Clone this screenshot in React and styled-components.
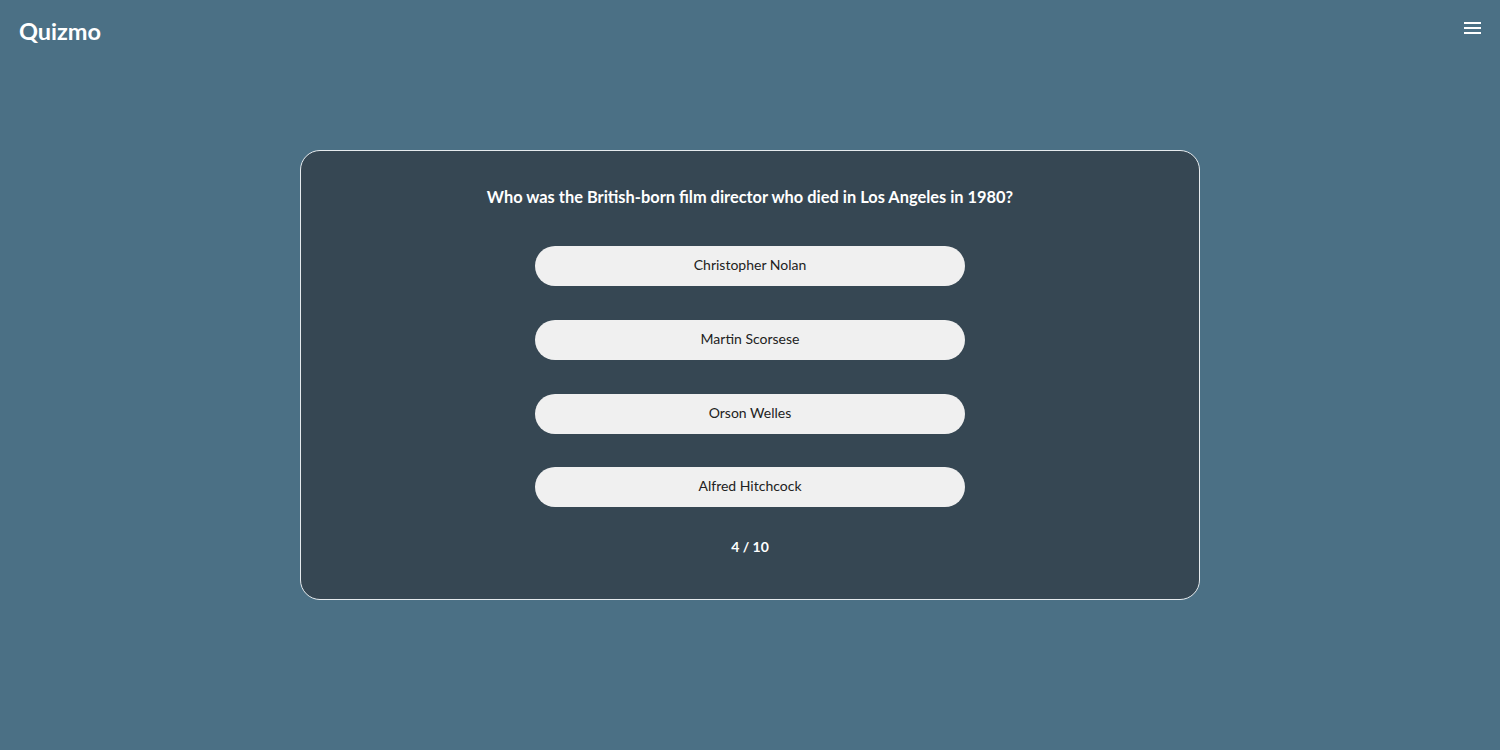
import styled, { createGlobalStyle } from "styled-components";

const GlobalStyle = createGlobalStyle`
  html, body {
    margin: 0;
    padding: 0;
    background: #4b7085;
    font-family: "Lato", "Noto Sans", sans-serif;
  }
`;

const answers = [
  "Christopher Nolan",
  "Martin Scorsese",
  "Orson Welles",
  "Alfred Hitchcock",
];

export default function App() {
  return (
    <>
      <GlobalStyle />
      <Page>
        <Header>
          <Logo>Quizmo</Logo>
          <MenuButton aria-label="menu">
            <span />
            <span />
            <span />
          </MenuButton>
        </Header>
        <Main>
          <Card>
            <Question>
              Who was the British-born film director who died in Los Angeles in 1980?
            </Question>
            <Answers>
              {answers.map((a) => (
                <Answer key={a}>{a}</Answer>
              ))}
            </Answers>
            <Counter>4 / 10</Counter>
          </Card>
        </Main>
      </Page>
    </>
  );
}

const Page = styled.div`
  width: 100%;
  min-height: 750px;
  background: #4b7085;
  display: flex;
  flex-direction: column;
`;

const Header = styled.header`
  height: 62px;
  box-sizing: border-box;
  padding: 0 19px;
  display: flex;
  align-items: center;
  justify-content: space-between;
`;

const Logo = styled.div`
  color: #fff;
  font-size: 23.5px;
  font-weight: 700;
  margin-top: -1px;
`;

const MenuButton = styled.button`
  background: none;
  border: none;
  padding: 0;
  width: 17px;
  display: flex;
  flex-direction: column;
  gap: 3px;
  margin-top: -6px;
  cursor: pointer;

  span {
    display: block;
    height: 2px;
    width: 17px;
    background: #fff;
  }
`;

const Main = styled.main`
  display: flex;
  justify-content: center;
  padding-top: 88px;
`;

const Card = styled.section`
  width: 900px;
  box-sizing: border-box;
  background: #364753;
  border: 1px solid #e6ebee;
  border-radius: 20px;
  padding: 35px 0 43px;
  display: flex;
  flex-direction: column;
  align-items: center;
`;

const Question = styled.h2`
  margin: 0;
  color: #fff;
  font-size: 16.4px;
  font-weight: 700;
  line-height: 22px;
`;

const Answers = styled.div`
  margin-top: 38px;
  display: flex;
  flex-direction: column;
  gap: 33.8px;
`;

const Answer = styled.button`
  width: 430px;
  height: 40px;
  padding: 0 0 2px;
  border: none;
  border-radius: 20px;
  background: #f0f0f0;
  color: #222;
  font-family: "Lato", "Noto Sans", sans-serif;
  font-size: 14px;
  line-height: 18px;
  cursor: pointer;

  &:hover {
    opacity: 0.85;
  }
`;

const Counter = styled.div`
  margin-top: 31px;
  color: #fff;
  font-size: 14px;
  font-weight: 700;
  line-height: 18px;
`;
